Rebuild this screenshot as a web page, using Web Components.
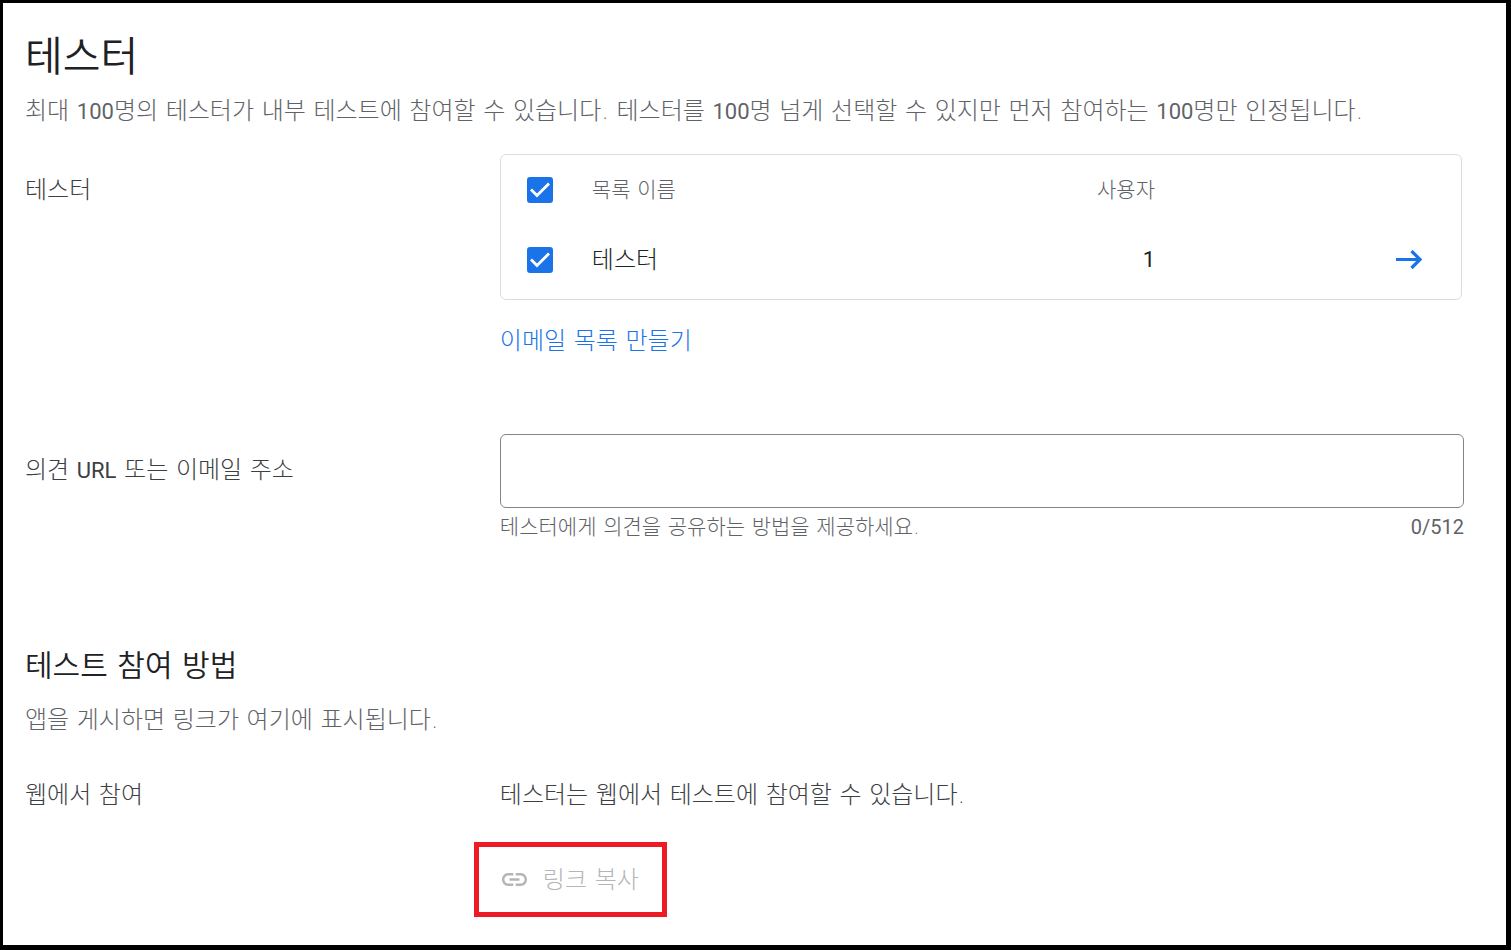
<!DOCTYPE html>
<html lang="ko">
<head>
<meta charset="utf-8">
<meta name="viewport" content="width=device-width, initial-scale=1">
<title>테스터</title>
<style>
    body {
        margin: 0;
        background-color: #fff;
        font-family: "DejaVu Sans", "Noto Sans CJK KR", sans-serif;
        font-size: 24px;
        font-weight: 300;
        line-height: 32px;
        color: #3c4043;
    }
</style>
</head>
<body>
<testers-page></testers-page>

<script>
// SECTION HEADING - title on top, grey description under it
var template_heading = document.createElement("template");
template_heading.innerHTML = `
    <slot name="title"></slot>
    <p><slot></slot></p>
    <style>
        :host {
            display: block;
        }
        ::slotted(h1), ::slotted(h2) {
            margin: 0;
            font-weight: 350;
            color: #202124;
        }
        ::slotted(h1) {
            font-size: 41px;
            line-height: 52px;
        }
        ::slotted(h2) {
            font-size: 30px;
            line-height: 40px;
        }
        p {
            margin: var(--heading-gap, 12px) 0 0;
            color: #5f6368;
        }
    </style>
`;

class SectionHeading extends HTMLElement {
    constructor(){
        super();
        this.attachShadow({mode:"open"})
    }
    connectedCallback(){
        this.shadowRoot.appendChild(template_heading.content.cloneNode(true));
    }
}
customElements.define("section-heading", SectionHeading)


// FORM ROW - label column and content column
var template_row = document.createElement("template");
template_row.innerHTML = `
    <div class="label"><slot name="label"></slot></div>
    <div class="content"><slot></slot></div>
    <style>
        :host {
            display: grid;
            grid-template-columns: 33% minmax(0, 1fr);
        }
        .label {
            padding-top: var(--label-top, 20px);
        }
    </style>
`;

class FormRow extends HTMLElement {
    constructor(){
        super();
        this.attachShadow({mode:"open"})
    }
    connectedCallback(){
        this.shadowRoot.appendChild(template_row.content.cloneNode(true));
    }
}
customElements.define("form-row", FormRow)


// CHECK BOX - real input with the tick drawn on top of it
var template_check = document.createElement("template");
template_check.innerHTML = `
    <input type="checkbox" checked>
    <svg viewBox="0 0 26 26" aria-hidden="true">
        <path d="M4 12.5l6 6L22 6.5" fill="none" stroke="#fff" stroke-width="2.8"/>
    </svg>
    <style>
        :host {
            display: grid;
            width: 26px;
            height: 26px;
        }
        input, svg {
            grid-area: 1 / 1;
            width: 26px;
            height: 26px;
        }
        input {
            appearance: none;
            margin: 0;
            border: 2px solid #5f6368;
            border-radius: 3px;
        }
        input:checked {
            border-color: #1a73e8;
            background-color: #1a73e8;
        }
        svg {
            pointer-events: none;
        }
        input:not(:checked) + svg {
            visibility: hidden;
        }
    </style>
`;

class CheckBox extends HTMLElement {
    constructor(){
        super();
        this.attachShadow({mode:"open"})
    }
    connectedCallback(){
        this.shadowRoot.appendChild(template_check.content.cloneNode(true));
        this.shadowRoot.querySelector("input").setAttribute("aria-label", this.getAttribute("name"));
    }
}
customElements.define("check-box", CheckBox)


// TESTER LIST - table of the e-mail lists
var template_list = document.createElement("template");
template_list.innerHTML = `
    <table>
        <colgroup><col class="pick"><col><col class="users"><col class="open"></colgroup>
        <thead>
            <tr>
                <th><check-box name="모두 선택"></check-box></th>
                <th>목록 이름</th>
                <th class="num">사용자</th>
                <th></th>
            </tr>
        </thead>
        <tbody>
            <tr>
                <td><check-box name="테스터"></check-box></td>
                <td>테스터</td>
                <td class="num">1</td>
                <td class="arrow">
                    <button type="button" aria-label="목록 열기">
                        <svg viewBox="0 0 28 20" width="28" height="20" aria-hidden="true">
                            <path d="M0 9.5h25M15.5 1l8.5 8.5-8.5 8.5" fill="none" stroke="#1a73e8" stroke-width="3.2"/>
                        </svg>
                    </button>
                </td>
            </tr>
        </tbody>
    </table>
    <style>
        :host {
            display: block;
            margin-right: 2px;
            padding-bottom: 5px;
            border: 1px solid #dadce0;
            border-radius: 6px;
        }
        table {
            width: 100%;
            table-layout: fixed;
            border-collapse: collapse;
        }
        .pick {
            width: 91px;
        }
        .users {
            width: 200px;
        }
        .open {
            width: 306px;
        }
        th, td {
            padding: 0;
            text-align: left;
        }
        th {
            height: 70px;
            font-size: 21px;
            font-weight: 300;
            color: #5f6368;
        }
        td {
            height: 69px;
            color: #202124;
        }
        th:first-child, td:first-child {
            padding-left: 26px;
        }
        th.num, td.num {
            text-align: right;
        }
        td.num {
            font-family: Roboto, sans-serif;
            font-size: 22px;
            font-weight: 400;
        }
        .arrow {
            padding-right: 37px;
        }
        button {
            display: block;
            margin-left: auto;
            padding: 0;
            border: 0;
            background: none;
            cursor: pointer;
        }
        svg {
            display: block;
        }
    </style>
`;

class TesterList extends HTMLElement {
    constructor(){
        super();
        this.attachShadow({mode:"open"})
    }
    connectedCallback(){
        this.shadowRoot.appendChild(template_list.content.cloneNode(true));
    }
}
customElements.define("tester-list", TesterList)


// FEEDBACK FIELD - text box with a hint and a counter
var template_feedback = document.createElement("template");
template_feedback.innerHTML = `
    <form-row>
        <label slot="label" for="feedback">의견 <span>URL</span> 또는 이메일 주소</label>
        <input id="feedback" type="text" maxlength="512" aria-describedby="hint">
        <div class="under">
            <span id="hint">테스터에게 의견을 공유하는 방법을 제공하세요.</span>
            <span class="count">0/512</span>
        </div>
    </form-row>
    <style>
        :host {
            display: block;
        }
        label span {
            font-family: Roboto, sans-serif;
            font-size: 22px;
            font-weight: 400;
        }
        input {
            display: block;
            box-sizing: border-box;
            width: 100%;
            height: 74px;
            padding: 0 22px;
            border: 1px solid #80868b;
            border-radius: 6px;
            font: inherit;
            color: inherit;
        }
        .under {
            display: flex;
            justify-content: space-between;
            padding-top: 5px;
            font-size: 21px;
            line-height: 28px;
            color: #5f6368;
        }
        .count {
            font-family: Roboto, sans-serif;
            font-size: 20px;
            font-weight: 400;
        }
    </style>
`;

class FeedbackField extends HTMLElement {
    constructor(){
        super();
        this.attachShadow({mode:"open"})
    }
    connectedCallback(){
        this.shadowRoot.appendChild(template_feedback.content.cloneNode(true));
        var input = this.shadowRoot.querySelector("input");
        input.addEventListener("input", () => {
            this.shadowRoot.querySelector(".count").innerText = input.value.length + "/512";
        });
    }
}
customElements.define("feedback-field", FeedbackField)


// COPY LINK - disabled button inside a red marker
var template_copy = document.createElement("template");
template_copy.innerHTML = `
    <button type="button" disabled>
        <svg viewBox="2 7 20 10" width="25" height="13" preserveAspectRatio="none" aria-hidden="true">
            <path fill="currentColor" d="M3.9 12c0-1.71 1.39-3.1 3.1-3.1h4V7H7c-2.76 0-5 2.24-5 5s2.24 5 5 5h4v-1.9H7c-1.71 0-3.1-1.39-3.1-3.1zM8 13h8v-2H8v2zm9-6h-4v1.9h4c1.71 0 3.1 1.39 3.1 3.1s-1.39 3.1-3.1 3.1h-4V17h4c2.76 0 5-2.24 5-5s-2.24-5-5-5z"/>
        </svg>
        <slot></slot>
    </button>
    <style>
        :host {
            display: block;
            box-sizing: border-box;
            width: fit-content;
            border: 5px solid #ed1c24;
        }
        button {
            display: flex;
            align-items: center;
            gap: 16px;
            height: 65px;
            padding: 0 23px;
            border: 0;
            background: none;
            font: inherit;
            color: #b4b5b6;
        }
    </style>
`;

class CopyLink extends HTMLElement {
    constructor(){
        super();
        this.attachShadow({mode:"open"})
    }
    connectedCallback(){
        this.shadowRoot.appendChild(template_copy.content.cloneNode(true));
    }
}
customElements.define("copy-link", CopyLink)


// THE PAGE
var template_page = document.createElement("template");
template_page.innerHTML = `
    <main>
        <section-heading>
            <h1 slot="title">테스터</h1>
            최대 <span class="latin">100</span>명의 테스터가 내부 테스트에 참여할 수 있습니다. 테스터를 <span class="latin">100</span>명 넘게 선택할 수 있지만 먼저 참여하는 <span class="latin">100</span>명만 인정됩니다.
        </section-heading>

        <form-row class="lists">
            <span slot="label">테스터</span>
            <tester-list></tester-list>
            <a href="#">이메일 목록 만들기</a>
        </form-row>

        <feedback-field></feedback-field>

        <section-heading class="join">
            <h2 slot="title">테스트 참여 방법</h2>
            앱을 게시하면 링크가 여기에 표시됩니다.
        </section-heading>

        <form-row class="web">
            <span slot="label">웹에서 참여</span>
            <p>테스터는 웹에서 테스트에 참여할 수 있습니다.</p>
            <copy-link>링크 복사</copy-link>
        </form-row>
    </main>
    <style>
        :host {
            display: block;
            box-sizing: border-box;
            min-height: 100vh;
            border: solid #000;
            border-width: 3px 5px 5px 3px;
        }
        main {
            padding: 28px 42px 28px 22px;
        }
        .latin {
            font-family: Roboto, sans-serif;
            font-size: 22px;
            font-weight: 400;
        }
        .lists {
            margin-top: 26px;
        }
        a {
            display: inline-block;
            margin-top: 25px;
            color: #1a73e8;
            text-decoration: none;
        }
        feedback-field {
            margin-top: 77px;
        }
        .join {
            --heading-gap: 18px;
            margin-top: 105px;
        }
        .web {
            --label-top: 0px;
            margin-top: 43px;
        }
        .web p {
            margin: 0;
        }
        copy-link {
            margin: 31px 0 0 -26px;
        }
    </style>
`;

class TestersPage extends HTMLElement {
    constructor(){
        super();
        this.attachShadow({mode:"open"})
    }
    connectedCallback(){
        this.shadowRoot.appendChild(template_page.content.cloneNode(true));
    }
}
customElements.define("testers-page", TestersPage)
</script>
</body>
</html>
